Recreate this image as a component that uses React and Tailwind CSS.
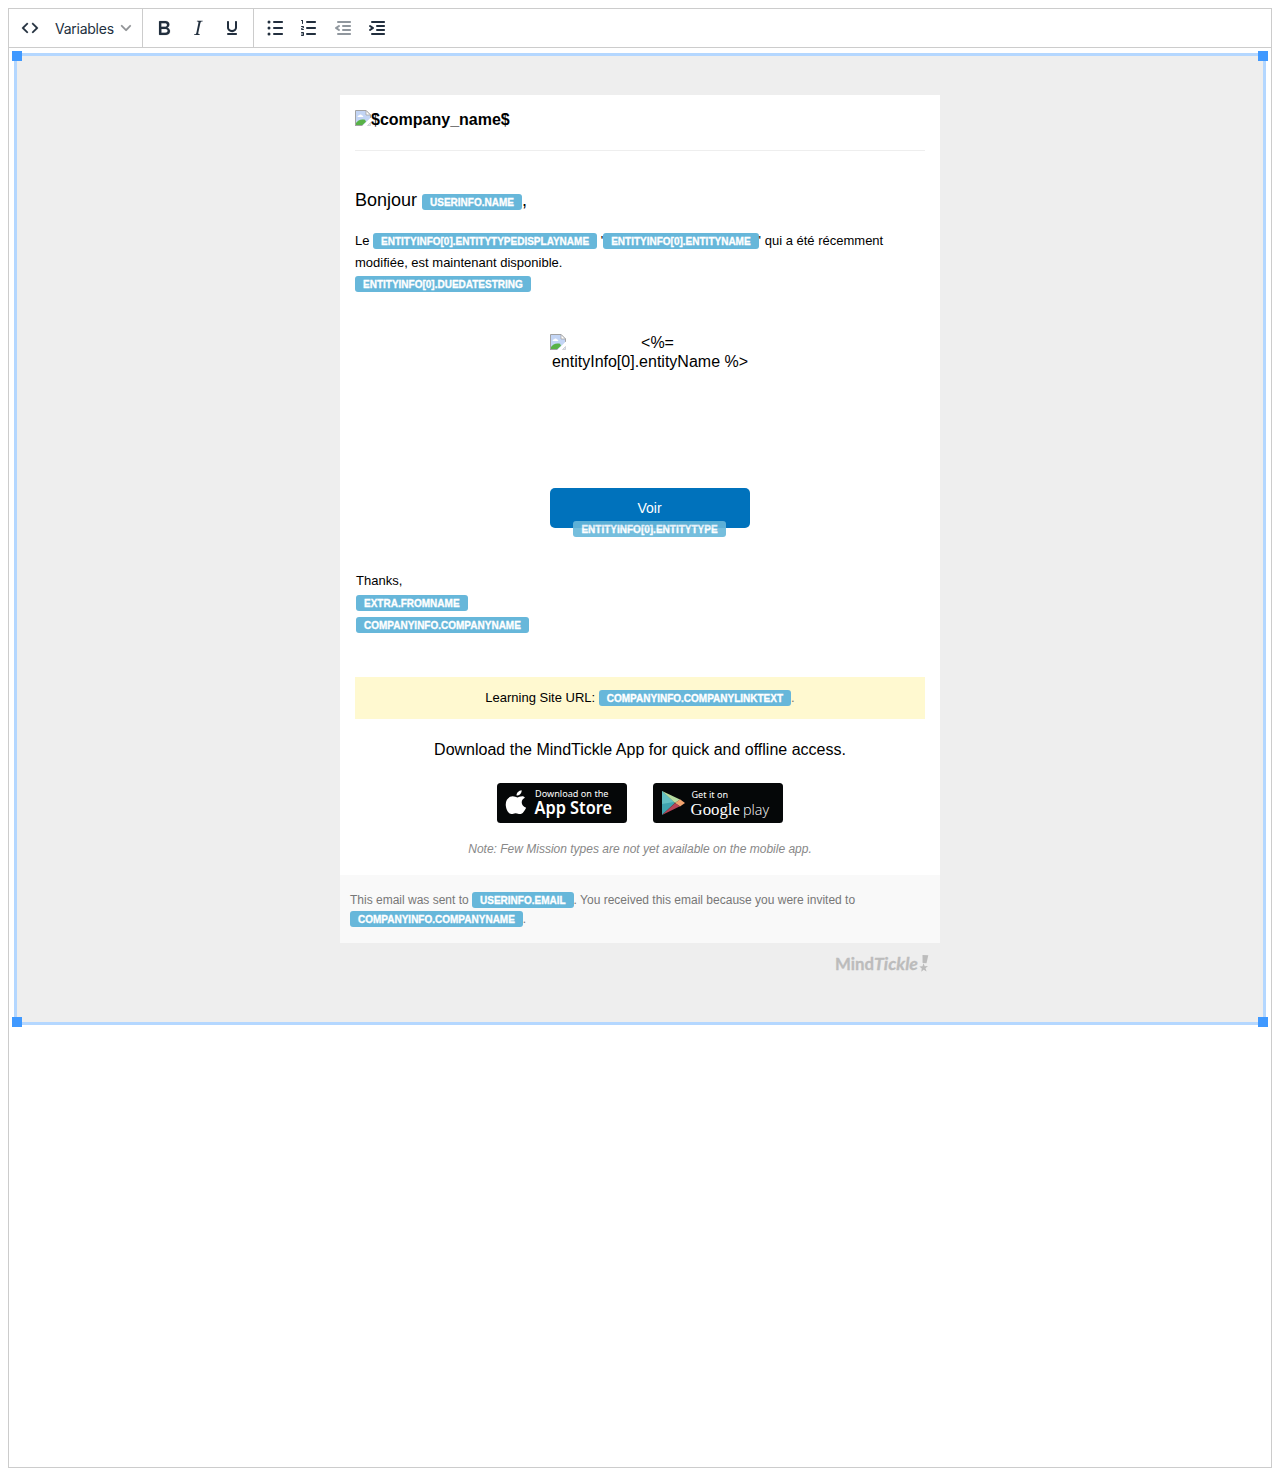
import React from "react";

const row = (y, x) => `M${x} ${y}h8c.6 0 1 .4 1 1s-.4 1-1 1h-8a1 1 0 0 1 0-2Z`;

const INDENT_ROWS =
  "M7 5h12c.6 0 1 .4 1 1s-.4 1-1 1H7a1 1 0 1 1 0-2Zm5 4h7c.6 0 1 .4 1 1s-.4 1-1 1h-7a1 1 0 0 1 0-2Zm0 4h7c.6 0 1 .4 1 1s-.4 1-1 1h-7a1 1 0 0 1 0-2Zm-5 4h12c.6 0 1 .4 1 1s-.4 1-1 1H7a1 1 0 0 1 0-2Z";

const ICONS = {
  code: "M9.8 15.7c.3.3.3.8 0 1-.3.4-.9.4-1.2 0l-4.4-4.1a.8.8 0 0 1 0-1.2l4.4-4.2c.3-.3.9-.3 1.2 0 .3.3.3.8 0 1.1L6 12l3.8 3.7ZM14.2 15.7c-.3.3-.3.8 0 1 .4.4.9.4 1.2 0l4.4-4.1c.3-.3.3-.9 0-1.2l-4.4-4.2a.8.8 0 0 0-1.2 0c-.3.3-.3.8 0 1.1L18 12l-3.8 3.7Z",
  bold: "M7.8 19c-.3 0-.5 0-.6-.2l-.2-.5V5.7c0-.2 0-.4.2-.5l.6-.2h5c1.5 0 2.7.3 3.5 1 .7.6 1.1 1.4 1.1 2.5a3 3 0 0 1-.6 1.9c-.4.6-1 1-1.6 1.2.4.1.9.3 1.3.6s.8.7 1 1.2c.4.4.5 1 .5 1.6 0 1.3-.4 2.3-1.3 3-.8.7-2.1 1-3.8 1H7.8Zm5-8.3c.6 0 1.2-.1 1.6-.5.4-.3.6-.7.6-1.3 0-1.1-.8-1.7-2.3-1.7H9.3v3.5h3.4Zm.5 6c.7 0 1.3-.1 1.7-.4.4-.4.6-.9.6-1.5s-.2-1-.7-1.4c-.4-.3-1-.4-2-.4H9.4v3.8h4Z",
  italic:
    "m16.7 4.7-.1.9h-.3c-.6 0-1 0-1.4.3-.3.3-.4.6-.5 1.1l-2.1 9.8v.6c0 .5.4.8 1.4.8h.2l-.2.8H8l.2-.8h.2c1.1 0 1.8-.5 2-1.5l2-9.8.1-.5c0-.6-.4-.8-1.4-.8h-.3l.2-.9h5.8Z",
  underline:
    "M16 5c.6 0 1 .4 1 1v5.5a4 4 0 0 1-.4 1.8l-1 1.4a5.3 5.3 0 0 1-5.5 1 5 5 0 0 1-1.6-1c-.5-.4-.8-.9-1.1-1.4a4 4 0 0 1-.4-1.8V6c0-.6.4-1 1-1s1 .4 1 1v5.5c0 .3 0 .6.2 1l.6.7a3.3 3.3 0 0 0 2.2.8 3.4 3.4 0 0 0 2.2-.8c.3-.2.4-.5.6-.8l.2-.9V6c0-.6.4-1 1-1ZM8 17h8c.6 0 1 .4 1 1s-.4 1-1 1H8a1 1 0 0 1 0-2Z",
  bullets:
    row(5, 11) + row(11, 11) + row(17, 11) +
    "M6 4.5a1.5 1.5 0 1 1 0 3 1.5 1.5 0 0 1 0-3ZM6 10.5a1.5 1.5 0 1 1 0 3 1.5 1.5 0 0 1 0-3ZM6 16.5a1.5 1.5 0 1 1 0 3 1.5 1.5 0 0 1 0-3Z",
  numbers:
    row(5, 10) + row(11, 10) + row(17, 10) +
    "M6 4v3.5c0 .3-.2.5-.5.5a.5.5 0 0 1-.5-.5V5h-.5a.5.5 0 0 1 0-1H6Zm-1 8.8.2.2h1.3c.3 0 .5.2.5.5s-.2.5-.5.5H4.9a1 1 0 0 1-.9-1V13c0-.4.3-.8.6-1l1.2-.4.2-.3a.2.2 0 0 0-.2-.2H4.5a.5.5 0 0 1-.5-.5c0-.3.2-.5.5-.5h1.6c.5 0 .9.4.9 1v.1c0 .4-.3.8-.6 1l-1.2.4-.2.3ZM7 17v2c0 .6-.4 1-1 1H4.5a.5.5 0 0 1 0-1h1.2c.2 0 .3-.1.3-.3 0-.2-.1-.3-.3-.3H4.4a.4.4 0 1 1 0-.8h1.3c.2 0 .3-.1.3-.3 0-.2-.1-.3-.3-.3H4.5a.5.5 0 1 1 0-1H6c.6 0 1 .4 1 1Z",
  outdent:
    INDENT_ROWS +
    "M8.6 13.2a1 1 0 0 1-1.2 1.6l-3-2a1 1 0 0 1 0-1.6l3-2a1 1 0 0 1 1.2 1.6L6.8 12l1.8 1.2Z",
  indent:
    INDENT_ROWS +
    "M4.4 13.2 6.2 12l-1.8-1.2a1 1 0 0 1 1.2-1.6l3 2a1 1 0 0 1 0 1.6l-3 2a1 1 0 1 1-1.2-1.6Z",
};

const STROKES = { code: 0.3, bold: 0.15 };

function ToolButton({ icon, disabled }) {
  return (
    <button className={`flex h-[34px] w-[34px] items-center justify-center ${disabled ? "text-[#222f3e]/50" : "text-[#222f3e]"}`}>
      <svg width="24" height="24" viewBox="0 0 24 24" fill="currentColor" fillRule="evenodd" stroke="currentColor" strokeWidth={STROKES[icon] || 0}>
        <path d={ICONS[icon]} />
      </svg>
    </button>
  );
}

function Toolbar() {
  return (
    <div className="flex h-[39px] border-b border-[#cccccc]">
      <div className="flex w-[134px] items-start border-r border-[#cccccc] px-1 pt-0.5">
        <ToolButton icon="code" />
        <button className="flex h-[34px] items-center pt-0.5 pl-2 font-[Inter,sans-serif] text-sm text-[#222f3e]">
          <span className="w-[66px] text-left tracking-[-0.25px]">Variables</span>
          <svg className="-mt-0.5" width="10" height="10" viewBox="0 0 10 10" fill="#909296" stroke="#909296" strokeWidth=".2" overflow="visible">
            <path d="M8.7 2.2c.3-.3.8-.3 1 0 .4.4.4.9 0 1.2L5.7 7.8c-.3.3-.9.3-1.2 0L.2 3.4a.8.8 0 0 1 0-1.2c.3-.3.8-.3 1.1 0L5 6l3.7-3.8Z" />
          </svg>
        </button>
      </div>
      <div className="flex w-[111px] items-start border-r border-[#cccccc] px-1 pt-0.5">
        <ToolButton icon="bold" />
        <ToolButton icon="italic" />
        <ToolButton icon="underline" />
      </div>
      <div className="flex items-start px-1 pt-0.5">
        <ToolButton icon="bullets" />
        <ToolButton icon="numbers" />
        <ToolButton icon="outdent" disabled />
        <ToolButton icon="indent" />
      </div>
    </div>
  );
}

function Tag({ children, className = "" }) {
  return (
    <span className={`inline-block h-4 rounded-[3px] bg-[#67b7da] px-2 align-middle text-[10px] leading-[17px] font-bold whitespace-nowrap text-white [-webkit-text-stroke:0.3px_white] ${className}`}>
      {children}
    </span>
  );
}

function BrokenImage() {
  return (
    <svg className="shrink-0" width="16" height="16" viewBox="0 0 16 16">
      <path d="M.5.5H11l4.500 4.500V8l-7.500 7.500H.5Z" fill="#c3d5f5" />
      <path d="M2.500 7c0-1 .8-1.700 1.600-1.500C4.500 4.200 6.500 4.200 7 5.500 7.800 5.500 8.300 6.200 8.300 7Z" fill="#fff" />
      <path d="M1 15v-2c1.500-2.500 5-4.500 9-3.200l1 2L7.500 15Z" fill="#58b247" />
      <path d="M.5 16V.5H11L15.500 5v3" fill="none" stroke="#a3a3a3" />
      <path d="M.5 15.500h7" fill="none" stroke="#a3a3a3" />
      <path d="M11 .5V5h4.500Z" fill="#fff" stroke="#a3a3a3" strokeWidth=".8" />
      <path d="M16 7.500 7.500 16H12l4-4Z" fill="#fff" />
      <path d="M12.500 15.500h3V12.500Z" fill="#dbe5f7" stroke="#b3b3b3" strokeWidth=".5" />
    </svg>
  );
}

function AppStoreBadge() {
  return (
    <svg width="130" height="40" viewBox="0 0 130 40">
      <rect width="130" height="40" rx="3.500" fill="#050708" />
      <g transform="translate(8 6.500) scale(1.060 .94)" fill="#fff">
        <path d="M18.700 8.800c-4.500 2.800-3.600 8.600 1.200 10.500-1.400 3.200-3.100 6.800-5.800 6.800-1.500 0-2.100-.9-4-.9s-2.600.9-4 .9C3.200 26.100.7 20.700.7 15.900c0-5 2.800-8.600 6.600-8.600 1.700 0 3.100 1.100 4.200 1.100 1 0 2.800-1.200 4.900-1.200 1 0 1.900.6 2.300 1.600Z" />
        <path d="M10.900 6.400C10.700 3.700 13 1 15.700.7c.3 3-2 5.700-4.800 5.700Z" />
      </g>
      <text x="38" y="14" fill="#fff" fontFamily="Noto Sans, sans-serif" fontSize="9" textLength="73.500" lengthAdjust="spacingAndGlyphs">Download on the</text>
      <text x="37.500" y="31" fill="#fff" fontFamily="Noto Sans, sans-serif" fontWeight="600" fontSize="17" textLength="77.500" lengthAdjust="spacingAndGlyphs">App Store</text>
    </svg>
  );
}

function GooglePlayBadge() {
  return (
    <svg width="130" height="40" viewBox="0 0 130 40">
      <rect width="130" height="40" rx="3.500" fill="#050708" />
      <path d="M9 8v24l13-12Z" fill="#3fa3ae" />
      <path d="M9 8v13l12-2Z" fill="#62bfc3" />
      <path d="M9 8 27 16.500 22 20Z" fill="#b5dba0" />
      <path d="M27 16.300 32 20l-5 3.500-5-3.500Z" fill="#f2a36e" />
      <path d="M9 32 22 20l5 3.300Z" fill="#b74457" />
      <text x="38.500" y="15" fill="#fff" fontFamily="Noto Sans, sans-serif" fontSize="9" textLength="36.500" lengthAdjust="spacingAndGlyphs">Get it on</text>
      <text x="37.500" y="32" fill="#fff" fontFamily="Liberation Serif, serif" fontSize="17.500" textLength="49.500" lengthAdjust="spacingAndGlyphs">Google</text>
      <text x="90" y="32" fill="#fff" fontFamily="Open Sans, sans-serif" fontWeight="300" fontSize="15" textLength="26" lengthAdjust="spacingAndGlyphs">play</text>
    </svg>
  );
}

function BrandMark() {
  return (
    <svg width="94" height="24" viewBox="0 0 94 24" fill="#bcbcbc" fontFamily="Lato, sans-serif" fontWeight="700" fontSize="17.500">
      <text x="0" y="17.500" stroke="#bcbcbc" strokeWidth=".3" textLength="39" lengthAdjust="spacingAndGlyphs">Mind</text>
      <text x="39" y="17.500" stroke="#bcbcbc" strokeWidth=".3" fontStyle="italic" textLength="44" lengthAdjust="spacingAndGlyphs">Tickle</text>
      <path d="m87.500 3 5.800.3-1.800 8-3.900-.3Z" />
      <path d="m88.500 11.300 1.200 2.900 3.300-.1-2.500 2.100 1.100 3.300-2.900-1.700-2.500 2 .6-3.300-2.500-1.900 3.200-.3Z" />
    </svg>
  );
}

function EmailCard() {
  return (
    <div className="w-[600px] bg-white">
      <div className="px-[15px] pt-[15px]">
        <div className="flex h-[41px] items-start border-b border-[#eeeeee]">
          <BrokenImage />
          <strong className="text-base leading-[19px]">$company_name$</strong>
        </div>
        <div className="mt-[38px] h-[22px] text-[18px] leading-[22px] whitespace-nowrap">
          Bonjour <Tag className="mt-px">USERINFO.NAME</Tag>,
        </div>
        <div className="mt-[19px] h-[98px] text-[13px] leading-[22px] whitespace-nowrap">
          <p className="h-[22px]">
            Le <Tag className="-mt-0.5">ENTITYINFO[0].ENTITYTYPEDISPLAYNAME</Tag> &#39;
            <Tag className="-mt-0.5">ENTITYINFO[0].ENTITYNAME</Tag>&#39; qui a été récemment
          </p>
          <p className="h-[22px]">modifiée, est maintenant disponible.</p>
          <p className="h-[22px]"><Tag className="-mt-1">ENTITYINFO[0].DUEDATESTRING</Tag></p>
        </div>
        <div className="mt-[5px] ml-[195px] h-[155px] w-[200px] text-base leading-[19px] whitespace-nowrap">
          <div className="flex h-[19px]">
            <span className="pt-px"><BrokenImage /></span>
            <span className="flex-1 pr-px text-center">&lt;%=</span>
          </div>
          <div className="text-center">entityInfo[0].entityName %&gt;</div>
        </div>
        <div className="ml-[195px] flex h-10 w-[200px] flex-col items-center rounded-[5px] bg-[#0072bc] text-sm leading-10 text-white">
          <span className="h-[33px] pr-px">Voir</span>
          <Tag className="mr-px shrink-0 opacity-90">ENTITYINFO[0].ENTITYTYPE</Tag>
        </div>
        <div className="mt-[42px] ml-px h-[107px] text-[13px] leading-[22px]">
          <p className="h-[22px]">Thanks,</p>
          <p className="h-[22px]"><Tag className="-mt-0.5">EXTRA.FROMNAME</Tag></p>
          <p className="h-[22px]"><Tag className="-mt-0.5">COMPANYINFO.COMPANYNAME</Tag></p>
        </div>
        <div className="h-[42px] bg-[#fff9d0] text-center text-[13px] leading-[42px]">
          Learning Site URL: <Tag className="-mt-0.5">COMPANYINFO.COMPANYLINKTEXT</Tag><span className="text-[#777777]">.</span>
        </div>
        <p className="mt-5 text-center text-base leading-[22px]">Download the MindTickle App for quick and offline access.</p>
        <div className="mt-[22px] flex justify-center gap-[26px]">
          <AppStoreBadge />
          <GooglePlayBadge />
        </div>
        <p className="mt-[17px] h-[35px] text-center text-xs leading-[18px] text-[#888888] italic">
          Note: Few Mission types are not yet available on the mobile app.
        </p>
      </div>
      <div className="h-[68px] bg-[#f9f9f9] px-2.5 pt-4 text-xs leading-[19px] whitespace-nowrap text-[#777777]">
        <p className="h-[19px]">
          This email was sent to <Tag className="-mt-0.5">USERINFO.EMAIL</Tag>. You received this email because you were invited to
        </p>
        <p className="h-[19px]"><Tag className="-mt-0.5">COMPANYINFO.COMPANYNAME</Tag>.</p>
      </div>
    </div>
  );
}

const HANDLE = "absolute h-2.5 w-2.5 bg-[#4099ff]";

export default function App() {
  return (
    <div className="h-[1476px] w-[1280px] bg-white p-2 font-['Liberation_Sans',Arial,sans-serif] text-black">
      <div className="h-[1460px] border border-[#cccccc]">
        <Toolbar />
        <div className="relative mx-[5px] mt-[5px] h-[972px] border-[3px] border-[#b4d7ff] bg-[#eeeeee] pt-[39px]">
          <div className="mx-auto w-[600px]">
            <EmailCard />
            <div className="mt-[9px] flex justify-end pr-[11px]">
              <BrandMark />
            </div>
          </div>
          <span className={`${HANDLE} -top-[5px] -left-[5px]`} />
          <span className={`${HANDLE} -top-[5px] -right-[5px]`} />
          <span className={`${HANDLE} -bottom-[5px] -left-[5px]`} />
          <span className={`${HANDLE} -right-[5px] -bottom-[5px]`} />
        </div>
      </div>
    </div>
  );
}
